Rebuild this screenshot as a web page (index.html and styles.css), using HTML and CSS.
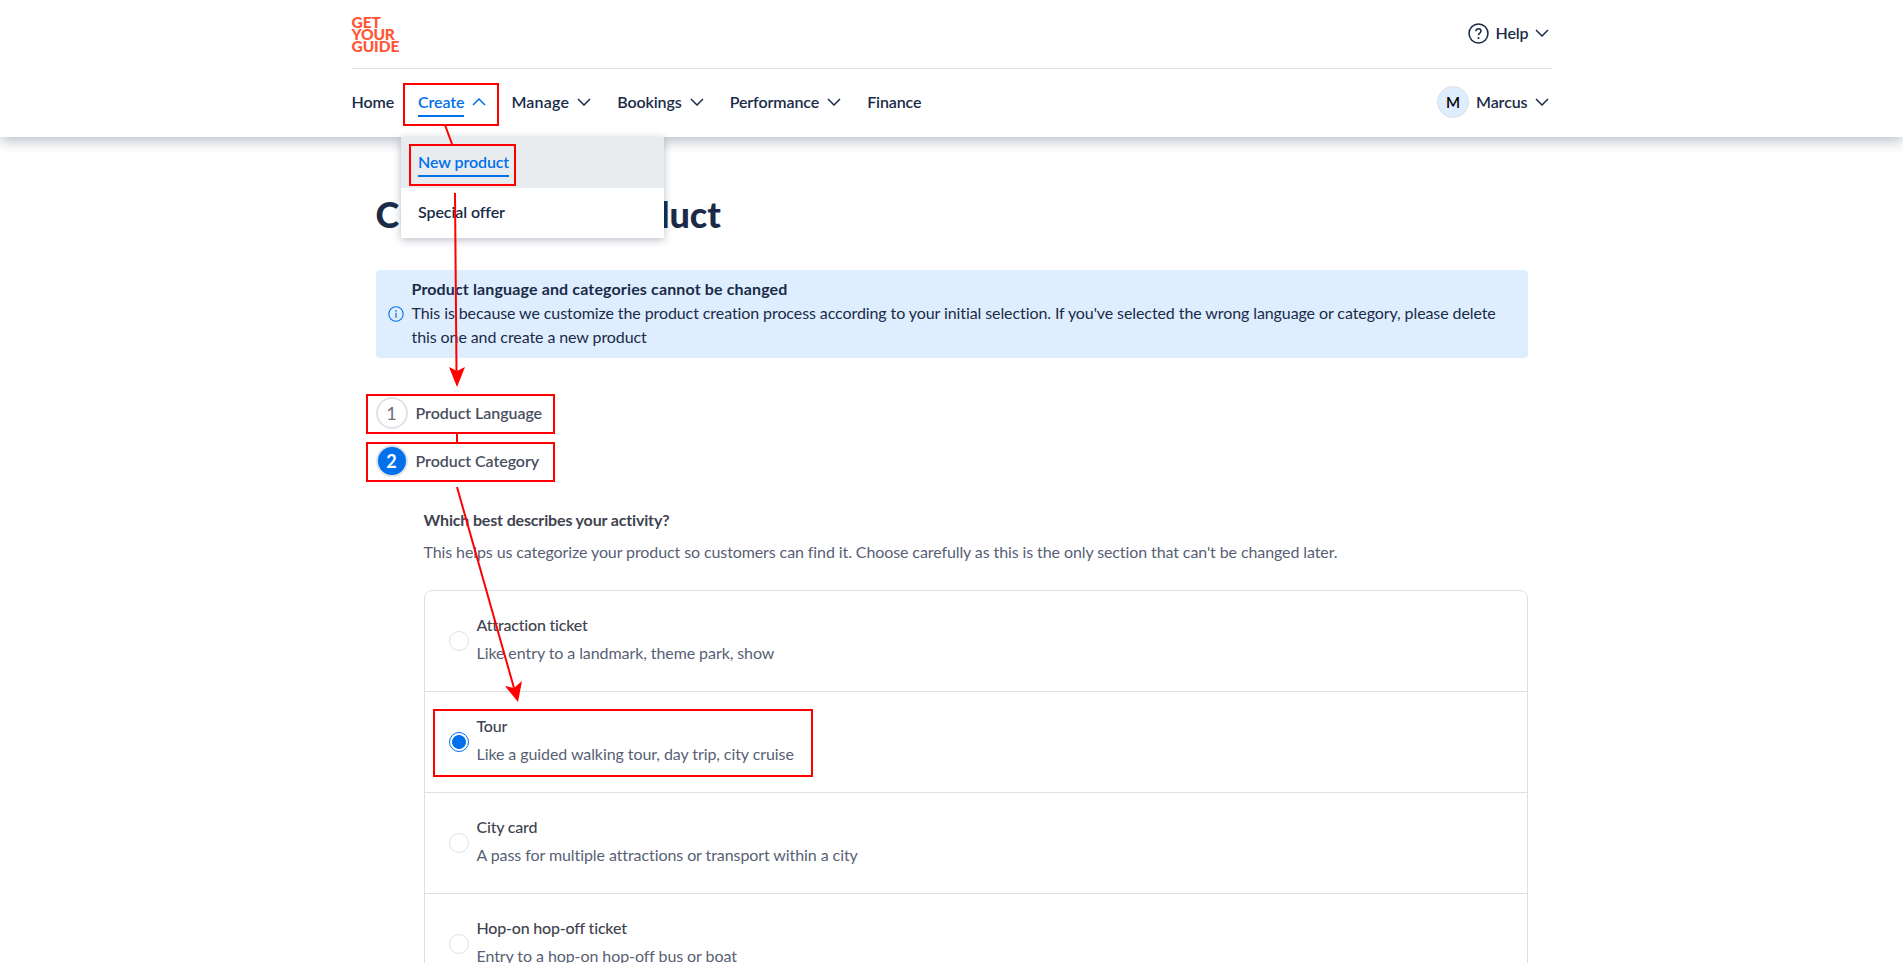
FILE: index.html
```html
<!DOCTYPE html>
<html lang="en">
<head>
<meta charset="utf-8">
<title>Create a new product</title>
<link rel="stylesheet" href="styles.css">
</head>
<body>
<header class="site-header">
  <div class="header-inner">
    <div class="top-bar">
      <a class="logo">GET<br>YOUR<br>GUIDE</a>
      <div class="nav-item help">
        <svg class="help-icon" viewBox="0 0 20 20" width="21" height="21"><circle cx="10" cy="10" r="9" fill="none" stroke="#1a2b49" stroke-width="1.5"/><path d="M7.6 7.800c0-1.400 1-2.300 2.400-2.300s2.400.900 2.400 2.200c0 1.900-2.400 1.900-2.400 3.900" fill="none" stroke="#1a2b49" stroke-width="1.500"/><circle cx="10" cy="14.400" r="1" fill="#1a2b49"/></svg>
        <span>Help</span>
        <svg class="chev" viewBox="0 0 14 8" width="14" height="8"><path d="M1 1l6 6 6-6" /></svg>
      </div>
    </div>
    <nav class="main-nav">
      <div class="nav-left">
        <a class="nav-item">Home</a>
        <div class="nav-item create">
          <span class="active-link">Create</span>
          <svg class="chev up" viewBox="0 0 14 8" width="14" height="8"><path d="M1 7l6-6 6 6" /></svg>
          <div class="dropdown">
            <div class="drop-row selected"><span class="active-link">New product</span></div>
            <div class="drop-row">Special offer</div>
          </div>
        </div>
        <div class="nav-item manage">Manage <svg class="chev" viewBox="0 0 14 8" width="14" height="8"><path d="M1 1l6 6 6-6" /></svg></div>
        <div class="nav-item">Bookings <svg class="chev" viewBox="0 0 14 8" width="14" height="8"><path d="M1 1l6 6 6-6" /></svg></div>
        <div class="nav-item">Performance <svg class="chev" viewBox="0 0 14 8" width="14" height="8"><path d="M1 1l6 6 6-6" /></svg></div>
        <a class="nav-item">Finance</a>
      </div>
      <div class="nav-item user">
        <span class="avatar">M</span>
        <span>Marcus</span>
        <svg class="chev" viewBox="0 0 14 8" width="14" height="8"><path d="M1 1l6 6 6-6" /></svg>
      </div>
    </nav>
  </div>
</header>

<main class="content">
  <h1 class="page-title">Create a new product</h1>

  <section class="notice">
    <svg class="notice-icon" viewBox="0 0 16 16" width="16" height="16"><circle cx="8" cy="8" r="7.200" fill="none" stroke="#0071eb" stroke-width="1.100"/><rect x="7.400" y="6.800" width="1.200" height="5" fill="#0071eb"/><circle cx="8" cy="4.900" r=".8" fill="#0071eb"/></svg>
    <div class="notice-body">
      <strong class="notice-title">Product language and categories cannot be changed</strong>
      <p class="notice-text">This is because we customize the product creation process according to your initial selection. If you've selected the wrong language or category, please delete this one and create a new product</p>
    </div>
  </section>

  <ol class="steps">
    <li class="step"><span class="step-num">1</span>Product Language</li>
    <li class="step current"><span class="step-num">2</span>Product Category</li>
  </ol>

  <section class="question">
    <h2 class="question-title">Which best describes your activity?</h2>
    <p class="question-help">This helps us categorize your product so customers can find it. Choose carefully as this is the only section that can't be changed later.</p>
    <div class="options">
      <div class="option">
        <span class="radio"></span>
        <div class="opt-text"><div class="opt-title">Attraction ticket</div><div class="opt-sub">Like entry to a landmark, theme park, show</div></div>
      </div>
      <div class="option">
        <span class="radio checked"></span>
        <div class="opt-text"><div class="opt-title">Tour</div><div class="opt-sub">Like a guided walking tour, day trip, city cruise</div></div>
      </div>
      <div class="option">
        <span class="radio"></span>
        <div class="opt-text"><div class="opt-title">City card</div><div class="opt-sub">A pass for multiple attractions or transport within a city</div></div>
      </div>
      <div class="option">
        <span class="radio"></span>
        <div class="opt-text"><div class="opt-title">Hop-on hop-off ticket</div><div class="opt-sub">Entry to a hop-on hop-off bus or boat</div></div>
      </div>
    </div>
  </section>
</main>

<svg class="annotations" viewBox="0 0 1903 963" width="1903" height="963">
  <g fill="none" stroke="#ff0000" stroke-width="2">
    <rect x="404" y="84" width="94" height="41"/>
    <rect x="410" y="145" width="105" height="40"/>
    <rect x="367" y="395" width="187" height="38"/>
    <rect x="367" y="443" width="187" height="38"/>
    <rect x="434" y="710" width="378" height="66"/>
    <path d="M445 125L452 144"/>
    <path d="M455 193L456.500 372"/>
    <path d="M457 433V443"/>
    <path d="M457 487L514 688"/>
  </g>
  <g fill="#ff0000">
    <path d="M457 387L449 367L457 371L465 367Z"/>
    <path d="M518 702L505 686L514 688L522 681Z"/>
  </g>
</svg>
</body>
</html>
```
FILE: styles.css
```css
* { box-sizing: border-box; }
html, body { margin: 0; padding: 0; height: 963px; overflow: hidden; background: #fff; }
body { position: relative; font-family: "Lato", "Liberation Sans", sans-serif; font-size: 16px; line-height: 24px; color: #1a2b49; }

.site-header { height: 137px; background: #fff; box-shadow: 0 4px 12px rgba(26, 43, 73, .3); position: relative; z-index: 2; }
.header-inner { width: 1200px; margin: 0 auto; }
.top-bar { height: 69px; display: flex; align-items: center; justify-content: space-between; border-bottom: 1px solid #dcdfe6; }
.logo { font-weight: 900; font-size: 15.500px; line-height: 12px; color: #ff5533; letter-spacing: -.1px; margin-top: -1px; }
.nav-item { display: flex; align-items: center; gap: 8px; font-weight: 600; white-space: nowrap; letter-spacing: -.1px; position: relative; top: -1px; }
.chev { fill: none; stroke: #1a2b49; stroke-width: 1.500; }
.chev.up { stroke: #0071eb; }
.help { gap: 6px; margin-right: 3px; }
.main-nav { height: 68px; display: flex; align-items: center; justify-content: space-between; }
.nav-left { display: flex; align-items: center; gap: 26px; }
.create { color: #0071eb; margin-left: -2px; }
.manage { letter-spacing: .2px; margin-left: -1px; }
.active-link { display: inline-block; position: relative; color: #0071eb; }
.active-link::after { content: ""; position: absolute; left: 0; right: 0; bottom: -3px; height: 2px; background: #0071eb; }
.dropdown { position: absolute; left: -17px; top: 47px; width: 263px; background: #fff; box-shadow: 0 2px 8px rgba(26, 43, 73, .3); color: #1a2b49; letter-spacing: -.1px; }
.drop-row { height: 50px; display: flex; align-items: center; padding: 0 17px 2px; }
.drop-row.selected { background: #e9ecef; height: 51px; }
.user { margin-right: 3px; gap: 7px; }
.avatar { width: 32px; height: 32px; border-radius: 50%; background: #deeeff; border: 1px solid #dcdfe6; display: flex; align-items: center; justify-content: center; color: #000; font-size: 15px; }

.content { width: 1152px; margin: 0 auto; padding-top: 55px; }
.page-title { margin: 0 0 34px; font-size: 36px; line-height: 44px; font-weight: 900; color: #1a2b49; }
.notice { height: 88px; background: #deeeff; border-radius: 4px; display: flex; align-items: center; gap: 8px; padding: 0 12px; }
.notice-icon { flex: none; }
.notice-body { margin-top: -2px; }
.notice-title { display: block; font-weight: 700; letter-spacing: .14px; }
.notice-text { margin: 0; letter-spacing: -.09px; }
.steps { list-style: none; margin: 39px 0 0; padding: 0; display: flex; flex-direction: column; gap: 16px; }
.step { height: 32px; display: flex; align-items: center; gap: 8px; font-weight: 600; color: #4a4f5e; letter-spacing: -.05px; line-height: 30px; }
.step-num { width: 32px; height: 32px; border-radius: 50%; border: 2px solid #dfe2e8; display: flex; align-items: center; justify-content: center; font-weight: 400; font-size: 18px; color: #6b7080; }
.current .step-num { background: #0071eb; color: #fff; font-weight: 700; }
.question { margin: 32px 0 0 48px; }
.question-title { margin: 0; font-size: 16px; line-height: 22px; font-weight: 700; color: #3f4450; letter-spacing: -.16px; }
.question-help { margin: 10px 0 25px; color: #585f75; line-height: 22px; letter-spacing: -.1px; padding-bottom: 2px; }
.options { border: 1px solid #dcdfe6; border-radius: 8px 8px 0 0; }
.option { height: 101px; display: flex; align-items: center; gap: 8px; padding-left: 24px; border-bottom: 1px solid #dcdfe6; }
.radio { width: 20px; height: 20px; border-radius: 50%; border: 1px solid #dcdfe6; flex: none; }
.radio.checked { border-color: #0071eb; background: radial-gradient(circle, #0071eb 6.500px, #fff 7.300px); }
.opt-text { margin-top: -5px; }
.opt-title { color: #3f4450; font-weight: 500; margin-bottom: 4px; letter-spacing: -.2px; }
.opt-sub { color: #585f75; letter-spacing: -.08px; }

.annotations { position: absolute; left: 0; top: 0; z-index: 3; pointer-events: none; }
```
